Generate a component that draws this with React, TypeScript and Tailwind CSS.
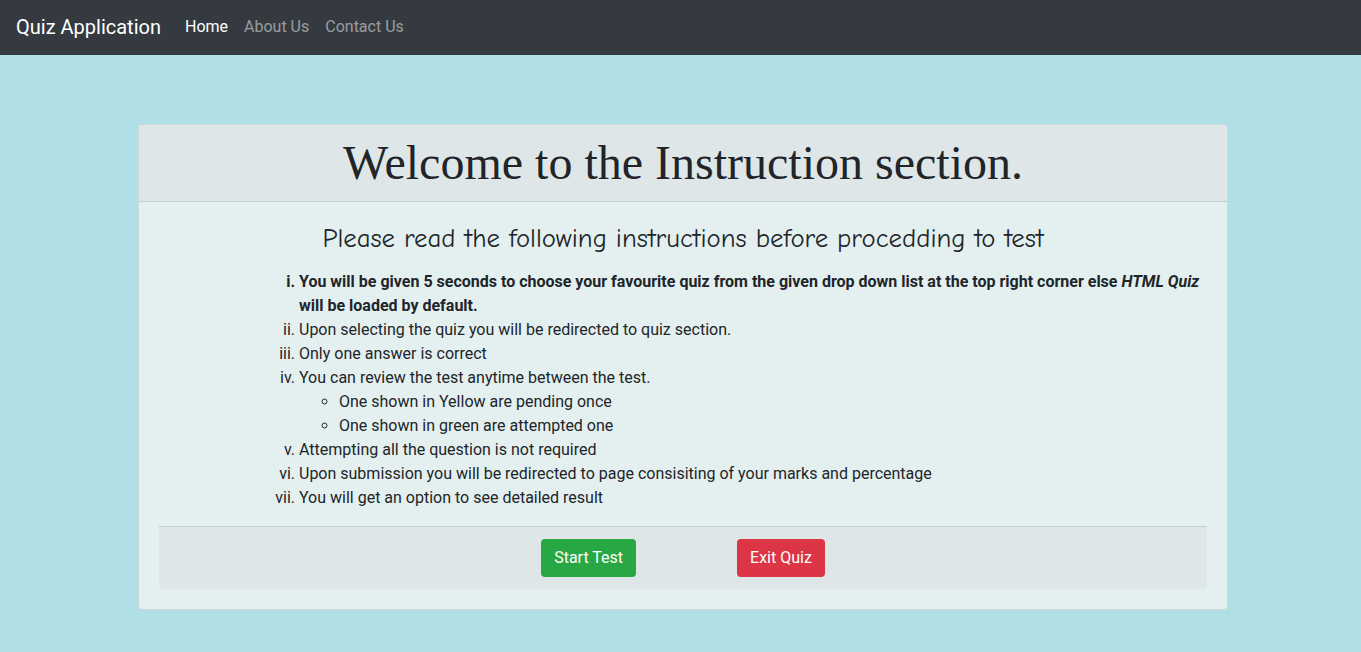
const items = [
  "Upon selecting the quiz you will be redirected to quiz section.",
  "Only one answer is correct",
];

const lastItems = [
  "Attempting all the question is not required",
  "Upon submission you will be redirected to page consisiting of your marks and percentage",
  "You will get an option to see detailed result",
];

export default function App() {
  return (
    <div className="min-h-[652px] bg-[#b0e0e6] font-['Roboto',sans-serif] text-[#212529]">
      <nav className="flex h-[55px] items-center bg-[#343a40] px-4 pb-[2px]">
        <span className="mr-4 text-[20px] leading-[30px] text-white">Quiz Application</span>
        <a className="px-2 text-base text-white">Home</a>
        <a className="px-2 text-base text-white/50">About Us</a>
        <a className="px-2 text-base text-white/50">Contact Us</a>
      </nav>

      <div className="ml-[138px] mt-[69px] w-[1090px] rounded border border-black/10 bg-[#e4f0f0]">
        <div className="border-b border-black/10 bg-[#dee6e7] py-3 text-center">
          <h1 className="font-['Liberation_Serif',serif] text-[48px] leading-[52px]">
            Welcome to the Instruction section.
          </h1>
        </div>

        <div className="p-5">
          <h4 className="mt-[2px] text-center font-['Comic_Sans_MS','Comic_Neue',cursive] text-[26.8px] leading-[29px]">
            Please read the following instructions before procedding to test
          </h4>
          <ol className="mb-4 ml-[100px] mt-[17px] list-[lower-roman] pl-10 text-base leading-6">
            <li className="font-bold">
              You will be given 5 seconds to choose your favourite quiz from the given drop down list at the top right corner else <i>HTML Quiz</i> will be loaded by default.
            </li>
            {items.map((t) => (
              <li key={t}>{t}</li>
            ))}
            <li>
              You can review the test anytime between the test.
              <ul className="list-[circle] pl-10">
                <li>One shown in Yellow are pending once</li>
                <li>One shown in green are attempted one</li>
              </ul>
            </li>
            {lastItems.map((t) => (
              <li key={t}>{t}</li>
            ))}
          </ol>

          <div className="flex justify-center gap-[101px] rounded-b border-t border-black/10 bg-[#dee6e7] py-3">
            <button className="h-[38px] rounded bg-[#28a745] px-[13px] text-base text-white">Start Test</button>
            <button className="h-[38px] rounded bg-[#dc3545] px-[13px] text-base text-white">Exit Quiz</button>
          </div>
        </div>
      </div>
    </div>
  );
}
